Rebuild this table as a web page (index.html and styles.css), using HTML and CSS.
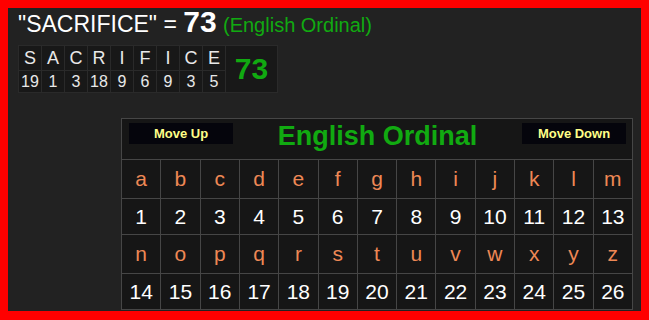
FILE: index.html
```html
<!DOCTYPE html>
<html lang="en">
<head>
<meta charset="utf-8">
<title>SACRIFICE = 73</title>
<link rel="stylesheet" href="styles.css">
</head>
<body>
<div class="page">
  <div class="summary"><span class="phrase">"SACRIFICE" = </span><span class="total">73</span> <span class="cipher">(English Ordinal)</span></div>
  <div class="breakdown">
    <div class="bl">S</div><div class="bl">A</div><div class="bl">C</div><div class="bl">R</div><div class="bl">I</div><div class="bl">F</div><div class="bl">I</div><div class="bl">C</div><div class="bl">E</div>
    <div class="bsum">73</div>
    <div class="bn">19</div><div class="bn">1</div><div class="bn">3</div><div class="bn">18</div><div class="bn">9</div><div class="bn">6</div><div class="bn">9</div><div class="bn">3</div><div class="bn">5</div>
  </div>
  <div class="chart">
    <div class="chart-head">
      <button class="move">Move Up</button>
      <div class="title">English Ordinal</div>
      <button class="move">Move Down</button>
    </div>
    <div class="ltr">a</div><div class="ltr">b</div><div class="ltr">c</div><div class="ltr">d</div><div class="ltr">e</div><div class="ltr">f</div><div class="ltr">g</div><div class="ltr">h</div><div class="ltr">i</div><div class="ltr">j</div><div class="ltr">k</div><div class="ltr">l</div><div class="ltr">m</div>
    <div class="num">1</div><div class="num">2</div><div class="num">3</div><div class="num">4</div><div class="num">5</div><div class="num">6</div><div class="num">7</div><div class="num">8</div><div class="num">9</div><div class="num">10</div><div class="num">11</div><div class="num">12</div><div class="num">13</div>
    <div class="ltr">n</div><div class="ltr">o</div><div class="ltr">p</div><div class="ltr">q</div><div class="ltr">r</div><div class="ltr">s</div><div class="ltr">t</div><div class="ltr">u</div><div class="ltr">v</div><div class="ltr">w</div><div class="ltr">x</div><div class="ltr">y</div><div class="ltr">z</div>
    <div class="num">14</div><div class="num">15</div><div class="num">16</div><div class="num">17</div><div class="num">18</div><div class="num">19</div><div class="num">20</div><div class="num">21</div><div class="num">22</div><div class="num">23</div><div class="num">24</div><div class="num">25</div><div class="num">26</div>
  </div>
</div>
</body>
</html>
```
FILE: styles.css
```css
html, body {
  margin: 0;
  padding: 0;
  background: #ff0000;
}
body {
  font-family: "Liberation Sans", Arial, sans-serif;
}
.page {
  border: 8px solid #ff0000;
  background: #222222;
  height: 303px;
  padding: 0 8px 0 10px;
  display: flex;
  flex-direction: column;
  overflow: hidden;
}
.summary {
  height: 37px;
  line-height: 28px;
  font-size: 23px;
  color: #ffffff;
  white-space: nowrap;
}
.total {
  font-weight: bold;
  font-size: 30px;
}
.cipher {
  font-size: 20px;
  color: #11aa11;
}
.breakdown {
  align-self: flex-start;
  display: grid;
  grid-template-columns: repeat(9, 22px) 51px;
  grid-template-rows: 24px 21px;
  gap: 1px;
  padding: 1px;
  background: #2a2a2a;
}
.bl, .bn, .bsum {
  background: #181818;
  color: #e8e8e8;
  text-align: center;
}
.bl {
  font-size: 18px;
  line-height: 24px;
}
.bn {
  font-size: 16px;
  line-height: 21px;
}
.bsum {
  grid-column: 10;
  grid-row: 1 / span 2;
  display: flex;
  align-items: center;
  justify-content: center;
  font-size: 30px;
  font-weight: bold;
  color: #11aa11;
}
.chart {
  margin-top: 25px;
  margin-left: auto;
  width: 510px;
  display: grid;
  grid-template-columns: repeat(13, 1fr);
  grid-template-rows: 40px 38px 35px 38px 35px;
  gap: 1px;
  padding: 1px;
  background: #464646;
}
.chart-head {
  grid-column: 1 / -1;
  background: #161616;
  display: flex;
  justify-content: space-between;
  align-items: flex-start;
  padding: 4px 6px 0 7px;
}
.move {
  width: 104px;
  height: 21px;
  border: 0;
  padding: 0;
  background: #05050c;
  color: #ffff88;
  font-family: "Liberation Sans", Arial, sans-serif;
  font-weight: bold;
  font-size: 13px;
}
.title {
  margin-top: -2px;
  font-size: 27px;
  font-weight: bold;
  color: #11aa11;
  line-height: 31px;
}
.ltr, .num {
  background: #161616;
  display: flex;
  align-items: center;
  justify-content: center;
  font-size: 21px;
}
.ltr {
  color: #ee8855;
}
.num {
  color: #ffffff;
}
```
